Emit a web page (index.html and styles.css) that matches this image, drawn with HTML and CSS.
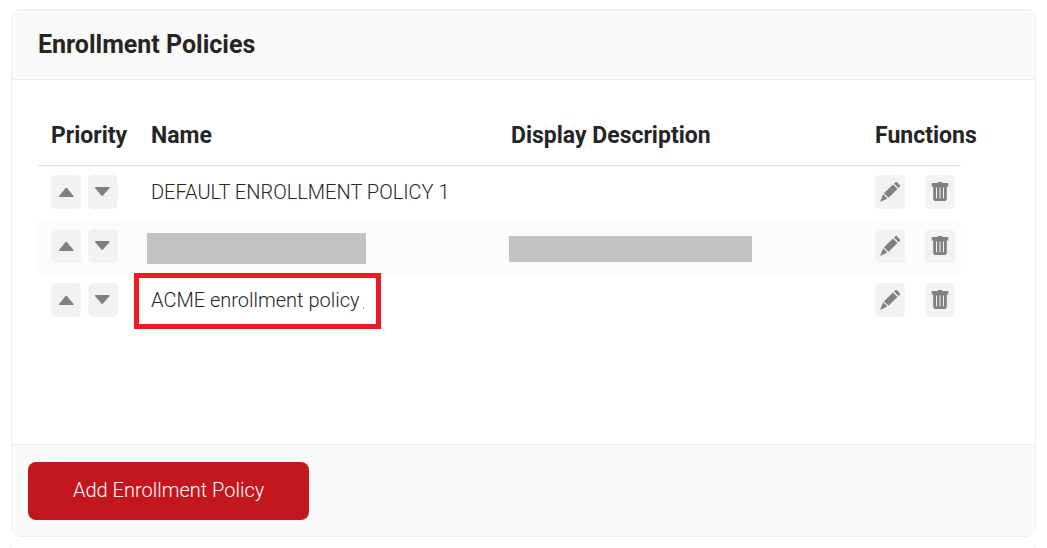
FILE: index.html
```html
<!DOCTYPE html>
<html lang="en">
<head>
    <meta charset="UTF-8">
    <meta name="viewport" content="width=device-width, initial-scale=1">
    <title>Enrollment Policies</title>
    <link rel="stylesheet" href="styles.css">
</head>
<body>
<!-- shared icons -->
<svg class="icons" aria-hidden="true">
    <symbol id="up" viewBox="0 0 30 34">
        <path d="M8.600 22q-1.200-.2-.4-1.200L14.400 13.200q.8-.8 1.600 0L22.400 20.800q.7 1-.5 1.200z"/>
    </symbol>
    <symbol id="down" viewBox="0 0 30 34">
        <path d="M7.600 12q-1.200.2-.4 1.200L13.400 20.600q.8.800 1.600 0L21.400 13.200q.7-1-.5-1.200z"/>
    </symbol>
    <symbol id="edit" viewBox="0 0 30 34">
        <path d="M5 27L8.200 19.200L12.400 23.600z"/>
        <path d="M9 18.200L18 9.500L22.500 14L13.500 22.700z"/>
        <path d="M19 8.500L20.700 7q.5-.5 1 0L25 10.600q.5.500 0 1L23.500 13z"/>
    </symbol>
    <symbol id="trash" viewBox="0 0 30 34">
        <path d="M7.500 8H12.300L13.300 7H16.700L17.700 8H22.500Q23.300 8 23.300 8.800V11.500H21.800V23.500Q21.800 26 19.500 26H10.500Q8.200 26 8.200 23.500V11.500H6.700V8.800Q6.700 8 7.500 8zM11 12.500V23.200H12V12.500zM14.500 12.500V23.200H15.500V12.500zM18 12.500V23.200H19V12.500z" fill-rule="evenodd"/>
    </symbol>
</svg>

<section class="panel">
    <header class="panel-header">
        <h2>Enrollment Policies</h2>
    </header>
    <div class="panel-body">
        <table class="policies">
            <thead>
            <tr>
                <th class="col-priority">Priority</th>
                <th class="col-name">Name</th>
                <th>Display Description</th>
                <th class="col-functions">Functions</th>
            </tr>
            </thead>
            <tbody>
            <tr>
                <td>
                    <div class="actions order">
                        <button type="button" aria-label="Move up"><svg><use href="#up"/></svg></button>
                        <button type="button" aria-label="Move down"><svg><use href="#down"/></svg></button>
                    </div>
                </td>
                <td>DEFAULT ENROLLMENT POLICY 1</td>
                <td></td>
                <td>
                    <div class="actions">
                        <button type="button" aria-label="Edit"><svg><use href="#edit"/></svg></button>
                        <button type="button" aria-label="Delete"><svg><use href="#trash"/></svg></button>
                    </div>
                </td>
            </tr>
            <tr>
                <td>
                    <div class="actions order">
                        <button type="button" aria-label="Move up"><svg><use href="#up"/></svg></button>
                        <button type="button" aria-label="Move down"><svg><use href="#down"/></svg></button>
                    </div>
                </td>
                <td><span class="redacted redacted-name"></span></td>
                <td><span class="redacted redacted-description"></span></td>
                <td>
                    <div class="actions">
                        <button type="button" aria-label="Edit"><svg><use href="#edit"/></svg></button>
                        <button type="button" aria-label="Delete"><svg><use href="#trash"/></svg></button>
                    </div>
                </td>
            </tr>
            <tr>
                <td>
                    <div class="actions order">
                        <button type="button" aria-label="Move up"><svg><use href="#up"/></svg></button>
                        <button type="button" aria-label="Move down"><svg><use href="#down"/></svg></button>
                    </div>
                </td>
                <td>ACME enrollment policy<span class="speck"></span><span class="highlight"></span></td>
                <td></td>
                <td>
                    <div class="actions">
                        <button type="button" aria-label="Edit"><svg><use href="#edit"/></svg></button>
                        <button type="button" aria-label="Delete"><svg><use href="#trash"/></svg></button>
                    </div>
                </td>
            </tr>
            </tbody>
        </table>
    </div>
    <footer class="panel-footer">
        <button type="button" class="btn-primary">Add Enrollment Policy</button>
    </footer>
</section>
<div class="panel-next"></div>
</body>
</html>
```

FILE: styles.css
```css
* {
    box-sizing: border-box;
}

body {
    margin: 0;
    padding: 9px 11px 0;
    background: #fff;
    color: #252525;
    font-family: Roboto, "Liberation Sans", sans-serif;
    font-size: 20px;
    font-weight: 300;
    line-height: 24px;
}

.icons {
    display: none;
}

.panel {
    border: 1px solid #ededed;
    border-radius: 10px;
    overflow: hidden;
}

.panel-header {
    padding: 21px 26px 20px;
    background: #fafafa;
    border-bottom: 1px solid #ededed;
}

.panel-header h2 {
    margin: 0;
    font-size: 25px;
    font-weight: 700;
    line-height: 28px;
}

.panel-body {
    min-height: 364px;
    padding: 26px 74px 26px 26px;
}

.policies {
    width: 100%;
    border-collapse: separate;
    border-spacing: 0;
    table-layout: fixed;
}

.policies th,
.policies td {
    position: relative;
    padding: 0 13px;
    text-align: left;
    white-space: nowrap;
}

.policies th {
    height: 60px;
    border-bottom: 1px solid #dcdcdc;
    font-size: 23px;
    font-weight: 700;
}

.policies td {
    height: 54px;
    padding-bottom: 2px;
}

.policies tbody tr:nth-child(even) {
    background: #fcfcfc;
}

.col-priority {
    width: 100px;
}

.col-name {
    width: 39%;
}

.col-functions {
    width: 99px;
}

.actions {
    display: flex;
    gap: 20px;
}

.actions.order {
    gap: 7px;
}

.actions button {
    flex: none;
    width: 30px;
    height: 34px;
    padding: 0;
    border: 0;
    border-radius: 5px;
    background: #f2f2f2;
    cursor: pointer;
}

.actions svg {
    display: block;
    width: 30px;
    height: 34px;
    fill: #808080;
}

/* masks laid over private values */
.redacted {
    position: absolute;
    background: #c3c3c3;
}

.redacted-name {
    top: 13px;
    left: 9px;
    width: 219px;
    height: 31px;
}

.redacted-description {
    top: 16px;
    left: 11px;
    width: 243px;
    height: 26px;
}

.highlight {
    position: absolute;
    top: -1px;
    left: -4px;
    width: 247px;
    height: 56px;
    border: 5px solid #ed1c24;
}

.speck {
    display: inline-block;
    width: 1px;
    height: 2px;
    margin-left: 3px;
    vertical-align: -2px;
    background: #9ab4c4;
}

.panel-footer {
    padding: 17px 16px 16px;
    background: #fafafa;
    border-top: 1px solid #ededed;
}

.btn-primary {
    display: block;
    padding: 16px 45px 18px;
    border: 0;
    border-radius: 8px;
    background: #c3171d;
    color: #fff;
    font: inherit;
    cursor: pointer;
}

.panel-next {
    height: 2px;
    margin-top: 9px;
    border: solid #ededed;
    border-width: 0 1px;
}
```
